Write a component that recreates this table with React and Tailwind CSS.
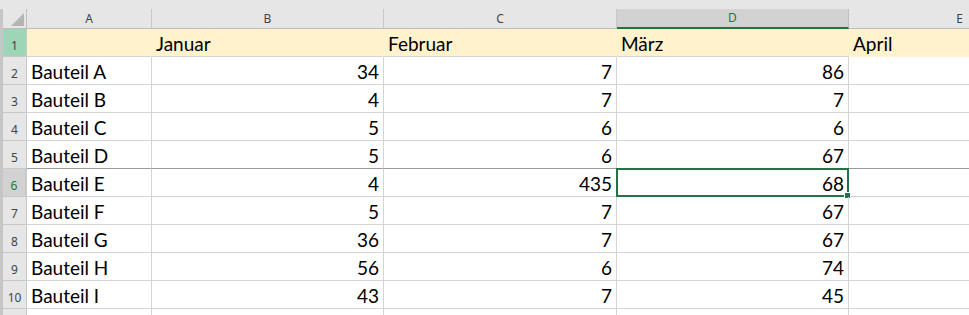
import React from "react";

const COLS = [
  { key: "A", w: "w-[125px]" },
  { key: "B", w: "w-[232px]" },
  { key: "C", w: "w-[233px]" },
  { key: "D", w: "w-[232px]" },
];

const ROWS = [
  ["Bauteil A", 34, 7, 86],
  ["Bauteil B", 4, 7, 7],
  ["Bauteil C", 5, 6, 6],
  ["Bauteil D", 5, 6, 67],
  ["Bauteil E", 4, 435, 68],
  ["Bauteil F", 5, 7, 67],
  ["Bauteil G", 36, 7, 67],
  ["Bauteil H", 56, 6, 74],
  ["Bauteil I", 43, 7, 45],
];

const cellFont = { fontFamily: "Lato, 'Open Sans', sans-serif" };
const headFont = { fontFamily: "'Noto Sans', 'Open Sans', sans-serif" };

function LeftStrip() {
  return <div className="w-[3px] shrink-0 bg-[#c6c6c6]" />;
}

function RowHead({ n, variant }) {
  let cls = "bg-[#e6e6e6] text-[#444] border-r border-[#bdbdbd]";
  if (variant === "green") cls = "bg-[#9fd5b7] text-[#2c4a3a] border-r border-[#bdbdbd]";
  if (variant === "active") cls = "bg-[#d2d2d2] text-[#217346] border-r-2 border-[#217346]";
  return (
    <div
      className={`w-[24px] shrink-0 flex items-end justify-center pb-[4px] text-[12px] leading-none border-b border-[#c8c8c8] ${cls}`}
      style={headFont}
    >
      {n}
    </div>
  );
}

function Cell({ w, children, right, yellow, selected, darkBottom }) {
  return (
    <div
      className={`relative ${w} shrink-0 border-r flex items-end px-[4px] pb-[2px] text-[19px] leading-none text-black ${
        right ? "justify-end" : "justify-start"
      } ${yellow ? "bg-[#fff2cc] border-[#fff2cc]" : "border-[#d4d4d4]"} ${
        darkBottom ? "border-b border-b-[#9a9a9a]" : "border-b border-b-[#d4d4d4]"
      }`}
      style={cellFont}
    >
      <span className="pb-[1px]">{children}</span>
      {selected && (
        <div className="absolute -left-[1px] -top-[1px] -right-[1px] -bottom-[1px] border-2 border-[#217346] pointer-events-none">
          <div className="absolute -right-[4px] -bottom-[4px] w-[7px] h-[7px] bg-[#217346] border border-white" />
        </div>
      )}
    </div>
  );
}

export default function App() {
  return (
    <div className="w-[969px] h-[315px] overflow-hidden bg-white select-none">
      {/* top strip */}
      <div className="h-[9px] bg-[#e6e6e6]" />

      {/* column headers */}
      <div className="flex h-[20px]">
        <LeftStrip />
        <div className="relative w-[24px] shrink-0 bg-[#e6e6e6] border-r border-b border-[#bdbdbd]">
          <svg className="absolute right-[2px] bottom-[2px]" width="13" height="13" viewBox="0 0 13 13">
            <polygon points="13,0 13,13 0,13" fill="#b4b4b4" />
          </svg>
        </div>
        {COLS.map((c) => {
          const active = c.key === "D";
          return (
            <div
              key={c.key}
              className={`${c.w} shrink-0 flex items-center justify-center text-[12px] border-r ${
                active
                  ? "bg-[#d2d2d2] text-[#217346] border-[#bdbdbd] border-b-2 border-b-[#217346]"
                  : "bg-[#e6e6e6] text-[#444] border-[#c8c8c8] border-b border-b-[#bdbdbd]"
              }`}
              style={headFont}
            >
              {c.key}
            </div>
          );
        })}
        <div
          className="flex-1 flex items-center justify-end pr-[6px] text-[12px] bg-[#e6e6e6] text-[#444] border-b border-[#bdbdbd]"
          style={headFont}
        >
          E
        </div>
      </div>

      {/* row 1: month headings */}
      <div className="flex h-[28px]">
        <LeftStrip />
        <RowHead n={1} variant="green" />
        <Cell w="w-[125px]" yellow />
        <Cell w="w-[232px]" yellow>Januar</Cell>
        <Cell w="w-[233px]" yellow>Februar</Cell>
        <Cell w="w-[232px]" yellow>März</Cell>
        <div className="flex-1 flex items-end px-[4px] pb-[3px] text-[19px] leading-none bg-[#fff2cc] border-b border-[#fff2cc]" style={cellFont}>
          April
        </div>
      </div>

      {/* data rows */}
      {ROWS.map((r, i) => {
        const rowNo = i + 2;
        const active = rowNo === 6;
        const darkBottom = rowNo === 5;
        return (
          <div key={rowNo} className="flex h-[28px]">
            <LeftStrip />
            <RowHead n={rowNo} variant={active ? "active" : undefined} />
            <Cell w="w-[125px]" darkBottom={darkBottom}>{r[0]}</Cell>
            <Cell w="w-[232px]" right darkBottom={darkBottom}>{r[1]}</Cell>
            <Cell w="w-[233px]" right darkBottom={darkBottom}>{r[2]}</Cell>
            <Cell w="w-[232px]" right darkBottom={darkBottom} selected={active}>{r[3]}</Cell>
            <div
              className={`flex-1 border-b ${darkBottom ? "border-[#9a9a9a]" : "border-[#d4d4d4]"}`}
            />
          </div>
        );
      })}

      {/* next row, only its top edge is in view */}
      <div className="flex h-[28px]">
        <LeftStrip />
        <RowHead />
        <Cell w="w-[125px]" />
        <Cell w="w-[232px]" />
        <Cell w="w-[233px]" />
        <Cell w="w-[232px]" />
        <div className="flex-1" />
      </div>
    </div>
  );
}
